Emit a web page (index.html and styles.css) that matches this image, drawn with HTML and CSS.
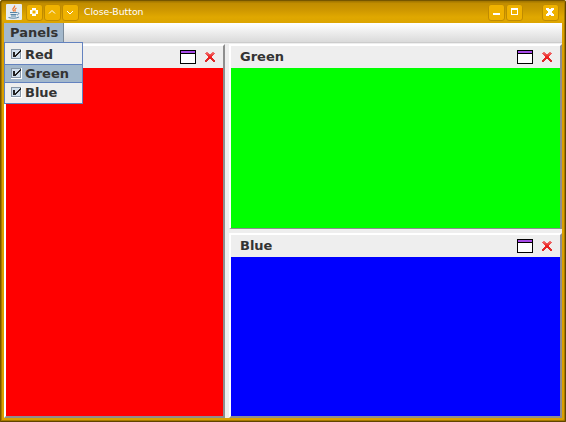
FILE: index.html
```
<!DOCTYPE html>
<html lang="en">
<head>
<meta charset="utf-8">
<title>Close-Button</title>
<link rel="stylesheet" href="styles.css">
</head>
<body>
<svg width="0" height="0" class="defs">
  <defs>
    <linearGradient id="redfade" x1="0" y1="0" x2="0" y2="1"><stop offset="0" stop-color="#f08080"/><stop offset="0.5" stop-color="#ee1c1c"/><stop offset="1" stop-color="#d83030"/></linearGradient>
    <symbol id="max" viewBox="0 0 16 14"><path fill="#000" d="M0 0h16v14H0z"/><path fill="#a74be8" d="M1 1h14v2H1z"/><path fill="#fff" d="M1 4h14v9H1z"/></symbol>
    <symbol id="close" viewBox="0 0 10 10"><path fill="url(#redfade)" d="M1 0h2v1h1v1h2V1h1V0h2v1h1v1H9v1H8v1H7v2h1v1h1v1h1v2H8V9H7V8H6V7H4v1H3v1H2v1H0V8h1V7h1V6h1V4H2V3H1V2H0V1h1z"/></symbol>
    <symbol id="check" viewBox="0 0 11 11"><path fill="#8796a8" d="M0 0h10v10H0z"/><path fill="#fff" d="M10 0h1v11H0v-1h10z"/><path fill="#d2e0ed" d="M1 1h8v8H1z"/><path fill="#222" d="M2 3h2v3h1V5h1V4h1V3h1V2h1V1h1v2H9v1H8v1H7v1H6v1H5v1H2z"/></symbol>
  </defs>
</svg>
<div class="window">
  <header class="titlebar">
    <svg class="java" width="16" height="16" viewBox="0 0 16 16"><rect width="16" height="16" rx="1" fill="#e7edf1"/><path d="M8.5 1.5c1 2-2.500 2.500-1.500 4.500l1 1.500M10.500 4c-2 1-2 2-1 3.500" fill="none" stroke="#ef7935" stroke-width="1.300"/><path d="M4 8.500h7M4.500 10.500h6M5 12h5M11.500 8.500c2 0 1.500 2-.5 2.500M2.500 13.500c3 1 8 1 10.500-.5" fill="none" stroke="#5684a5"/></svg>
    <span class="tb"><svg width="16" height="16" viewBox="0 0 16 16"><path fill="#fff" fill-rule="evenodd" d="M6 4h4v2h2v4h-2v2H6v-2H4V6h2zM6.500 6.500v3h3v-3z"/></svg></span>
    <span class="tb"><svg width="16" height="16" viewBox="0 0 16 16"><path fill="none" stroke="#fff" d="M5 9.500l3-3 3 3"/></svg></span>
    <span class="tb"><svg width="16" height="16" viewBox="0 0 16 16"><path fill="none" stroke="#fff" d="M5 7l3 3 3-3"/></svg></span>
    <span class="caption">Close-Button</span>
    <span class="tb min"><svg width="16" height="16" viewBox="0 0 16 16"><path fill="#fff" d="M5 9h7v2H5z"/></svg></span>
    <span class="tb"><svg width="16" height="16" viewBox="0 0 16 16"><path fill="#fff" fill-rule="evenodd" d="M5 4h7v7H5zM6 6v4h5V6z"/></svg></span>
    <span class="tb quit"><svg width="16" height="16" viewBox="0 0 16 16"><path fill="#fff" d="M4 4h3v1h2V4h3v2h-1v1h-1v2h1v1h1v2H9v-1H7v1H4v-2h1V9h1V7H5V6H4z"/></svg></span>
  </header>
  <div class="menubar"><span class="menu">Panels</span></div>
  <main class="content">
    <section class="panel left"><div class="head"><span>Red</span><svg class="max" width="16" height="14"><use href="#max"/></svg><svg width="10" height="10"><use href="#close"/></svg></div><div class="fill red"></div></section>
    <div class="column">
      <section class="panel top"><div class="head"><span>Green</span><svg class="max" width="16" height="14"><use href="#max"/></svg><svg width="10" height="10"><use href="#close"/></svg></div><div class="fill green"></div></section>
      <section class="panel bottom"><div class="head"><span>Blue</span><svg class="max" width="16" height="14"><use href="#max"/></svg><svg width="10" height="10"><use href="#close"/></svg></div><div class="fill blue"></div></section>
    </div>
  </main>
  <div class="popup">
    <div class="item"><svg width="11" height="11"><use href="#check"/></svg>Red</div>
    <div class="item active"><svg width="11" height="11"><use href="#check"/></svg>Green</div>
    <div class="item"><svg width="11" height="11"><use href="#check"/></svg>Blue</div>
  </div>
</div>
</body>
</html>
```
FILE: styles.css
```
* { box-sizing: border-box; }
body { margin: 0; background: #fff; overflow: hidden; font: bold 13px/16px "DejaVu Sans", sans-serif; color: #333; }
svg { display: block; flex: none; }
.defs { position: absolute; }
.window {
  position: relative; width: 566px; height: 422px; padding: 0 4px 4px;
  display: flex; flex-direction: column; border-radius: 3px 3px 1px 1px; overflow: hidden;
  background: #d99f00;
  box-shadow: inset 1px 1px #765600, inset -1px -1px #604500, inset 2px 0 #a67900, inset -2px -2px #a67900;
}
.titlebar {
  height: 23px; flex: none; margin: 0 -2px; padding: 4px 2px 0 4px; display: flex;
  background: linear-gradient(#765600 0 1px, #a67900 1px 2px, #c08c00 3px, #ce9700 10px, #e0a800 17px, #dca400 23px);
}
.java { margin-right: 4px; }
.tb { width: 17px; height: 17px; margin-right: 1px; border-radius: 3px; border: 1px solid #c08b00; background: #efb200; flex: none; }
.tb svg { margin: -1px; }
.caption { font: 9.3px/16px "DejaVu Sans", sans-serif; color: #fff; margin-left: 4px; flex: 1; white-space: nowrap; }
.quit { margin-left: 18px; margin-right: 3px; }
.menubar { height: 20px; flex: none; background: linear-gradient(#fff, #dadada); border-bottom: 1px solid #ccc; display: flex; }
.menu { width: 60px; padding: 2px 0 0 6px; background: #a3b8cc; border-right: 1px solid #7a8a99; }
.content { flex: 1; background: #eee; display: flex; gap: 4px; padding-top: 1px; min-height: 0; }
.panel { display: flex; flex-direction: column; border: 2px solid; border-color: #fff #8e8e8e #8e8e8e #fff; border-right-color: #8e8e8e; background: #eee; }
.left { width: 221px; }
.column { flex: 1; display: flex; flex-direction: column; gap: 4px; }
.top { height: 185px; border-bottom-width: 1px; }
.bottom { flex: 1; }
.head { height: 22px; flex: none; display: flex; align-items: center; padding: 0 8px 0 9px; }
.head span { flex: 1; }
.head .max { margin-right: 9px; }
.fill { flex: 1; }
.red { background: #f00; }
.green { background: #0f0; }
.blue { background: #00f; }
.popup { position: absolute; left: 4px; top: 42px; width: 79px; height: 62px; border: 1px solid #6382bf; background: #eee; padding-top: 2px; }
.item { height: 19px; display: flex; align-items: center; padding-left: 6px; gap: 3px; border: 0 solid #6382bf; }
.active { background: #a3b8cc; border-width: 1px 0; }
```
